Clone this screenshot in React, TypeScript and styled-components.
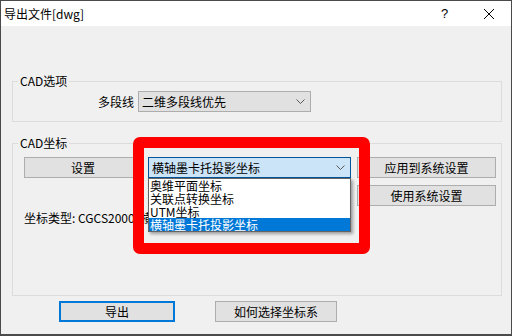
import styled, { createGlobalStyle } from 'styled-components'

const GlobalStyle = createGlobalStyle`
  html, body {
    margin: 0;
    padding: 0;
    background: #2b2b2b;
  }
`

const Chevron = () => (
  <svg width="9" height="5" viewBox="0 0 9 5">
    <polyline points="0.5,0.5 4.5,4.5 8.5,0.5" fill="none" stroke="#5a5a5a" strokeWidth="1" />
  </svg>
)

const CloseIcon = () => (
  <svg width="10" height="10" viewBox="0 0 10 10">
    <line x1="0" y1="0" x2="10" y2="10" stroke="#000" strokeWidth="1" />
    <line x1="10" y1="0" x2="0" y2="10" stroke="#000" strokeWidth="1" />
  </svg>
)

const listItems = ['奥维平面坐标', '关联点转换坐标', 'UTM坐标', '横轴墨卡托投影坐标']

export default function App() {
  return (
    <>
      <GlobalStyle />
      <Window>
        <TitleBar>
          <Title>导出文件[dwg]</Title>
          <TitleButton $shift={5}>?</TitleButton>
          <TitleButton $shift={1}>
            <CloseIcon />
          </TitleButton>
        </TitleBar>

        <Body>
          <GroupBox $top={55}>
            <GroupLabel>CAD选项</GroupLabel>
            <OptionRow>
              <FieldLabel>多段线</FieldLabel>
              <ComboBox $width={173}>
                <span>二维多段线优先</span>
                <Chevron />
              </ComboBox>
            </OptionRow>
          </GroupBox>

          <GroupBox $top={21} $height={153}>
            <GroupLabel>CAD坐标</GroupLabel>
            <CoordGrid>
              <Button>设置</Button>
              <ComboWrap>
                <ComboBox $width={203} $open>
                  <span>横轴墨卡托投影坐标</span>
                  <Chevron />
                </ComboBox>
                <DropList>
                  {listItems.map((item, i) => (
                    <ListItem key={item} $selected={i === listItems.length - 1}>
                      {item}
                    </ListItem>
                  ))}
                </DropList>
              </ComboWrap>
              <Button>应用到系统设置</Button>
              <Button $column={3}>使用系统设置</Button>
              <CoordInfo>坐标类型: CGCS2000, 横轴墨卡托投影坐标, 中央子午线: 105</CoordInfo>
            </CoordGrid>
          </GroupBox>

          <Footer>
            <Button $primary $width={116}>导出</Button>
            <Button $width={122}>如何选择坐标系</Button>
          </Footer>
        </Body>

        <Highlight />
      </Window>
    </>
  )
}

const Window = styled.div`
  position: relative;
  width: 512px;
  height: 336px;
  box-sizing: border-box;
  border: 1px solid #4a4a4a;
  border-bottom-width: 2px;
  background: #f0f0f0;
  display: flex;
  flex-direction: column;
  font-family: "Noto Sans CJK SC", "Noto Sans", sans-serif;
  font-size: 12px;
  color: #000;
  overflow: hidden;
`

const TitleBar = styled.div`
  height: 25px;
  flex: none;
  background: #fff;
  display: flex;
  align-items: center;
  padding-left: 3px;
`

const Title = styled.div`
  flex: 1;
  font-size: 12px;
  line-height: 16px;
`

const TitleButton = styled.div<{ $shift: number }>`
  width: 46px;
  height: 25px;
  box-sizing: border-box;
  padding-left: ${p => p.$shift}px;
  display: flex;
  align-items: center;
  justify-content: center;
  font-family: "Liberation Sans", sans-serif;
  font-size: 13px;
`

const Body = styled.div`
  flex: 1;
  display: flex;
  flex-direction: column;
  padding: 0 9px 0 11px;
`

const GroupBox = styled.div<{ $top: number; $height?: number }>`
  position: relative;
  margin-top: ${p => p.$top}px;
  ${p => (p.$height ? `height: ${p.$height}px;` : '')}
  box-sizing: border-box;
  border: 1px solid #dcdcdc;
  padding: 9px 0;
`

const GroupLabel = styled.div`
  position: absolute;
  top: -9px;
  left: 5px;
  padding: 0 2px;
  background: #f0f0f0;
  line-height: 16px;
`

const OptionRow = styled.div`
  display: flex;
  align-items: center;
`

const FieldLabel = styled.div`
  width: 121px;
  padding-right: 4px;
  text-align: right;
  line-height: 16px;
`

const ComboBox = styled.div<{ $width: number; $open?: boolean }>`
  width: ${p => p.$width}px;
  height: 21px;
  box-sizing: border-box;
  display: flex;
  align-items: center;
  justify-content: space-between;
  padding: 0 5px 0 3px;
  border: 1px solid ${p => (p.$open ? '#005499' : '#adadad')};
  background: ${p => (p.$open ? '#cce4f7' : '#e1e1e1')};
  line-height: 16px;
  white-space: nowrap;
`

const CoordGrid = styled.div`
  display: grid;
  grid-template-columns: 118px 203px 139px;
  column-gap: 6px;
  row-gap: 7px;
  padding: 4px 0 0 11px;
`

const ComboWrap = styled.div`
  position: relative;
`

const DropList = styled.div`
  position: absolute;
  top: 100%;
  left: 0;
  width: 100%;
  box-sizing: border-box;
  border: 1px solid #646464;
  background: #fff;
  box-shadow: 2px 2px 3px rgba(0, 0, 0, 0.35);
  z-index: 2;
`

const ListItem = styled.div<{ $selected?: boolean }>`
  height: 13px;
  line-height: 13px;
  padding-left: 1px;
  white-space: nowrap;
  background: ${p => (p.$selected ? '#0078d7' : 'transparent')};
  color: ${p => (p.$selected ? '#fff' : '#000')};
`

const Button = styled.div<{ $column?: number; $primary?: boolean; $width?: number }>`
  ${p => (p.$column ? `grid-column: ${p.$column};` : '')}
  ${p => (p.$width ? `width: ${p.$width}px;` : '')}
  height: 21px;
  box-sizing: border-box;
  display: flex;
  align-items: center;
  justify-content: center;
  border: ${p => (p.$primary ? '2px solid #0078d7' : '1px solid #adadad')};
  background: #e1e1e1;
  line-height: 16px;
  white-space: nowrap;
`

const CoordInfo = styled.div`
  grid-column: 1 / -1;
  margin-top: -3px;
  line-height: 16px;
  white-space: nowrap;
`

const Footer = styled.div`
  display: flex;
  gap: 40px;
  margin-top: 5px;
  padding-left: 47px;
`

const Highlight = styled.div`
  position: absolute;
  left: 132px;
  top: 136px;
  width: 237px;
  height: 117px;
  box-sizing: border-box;
  border: 11px solid #fe0000;
  border-radius: 7px;
  z-index: 3;
`
